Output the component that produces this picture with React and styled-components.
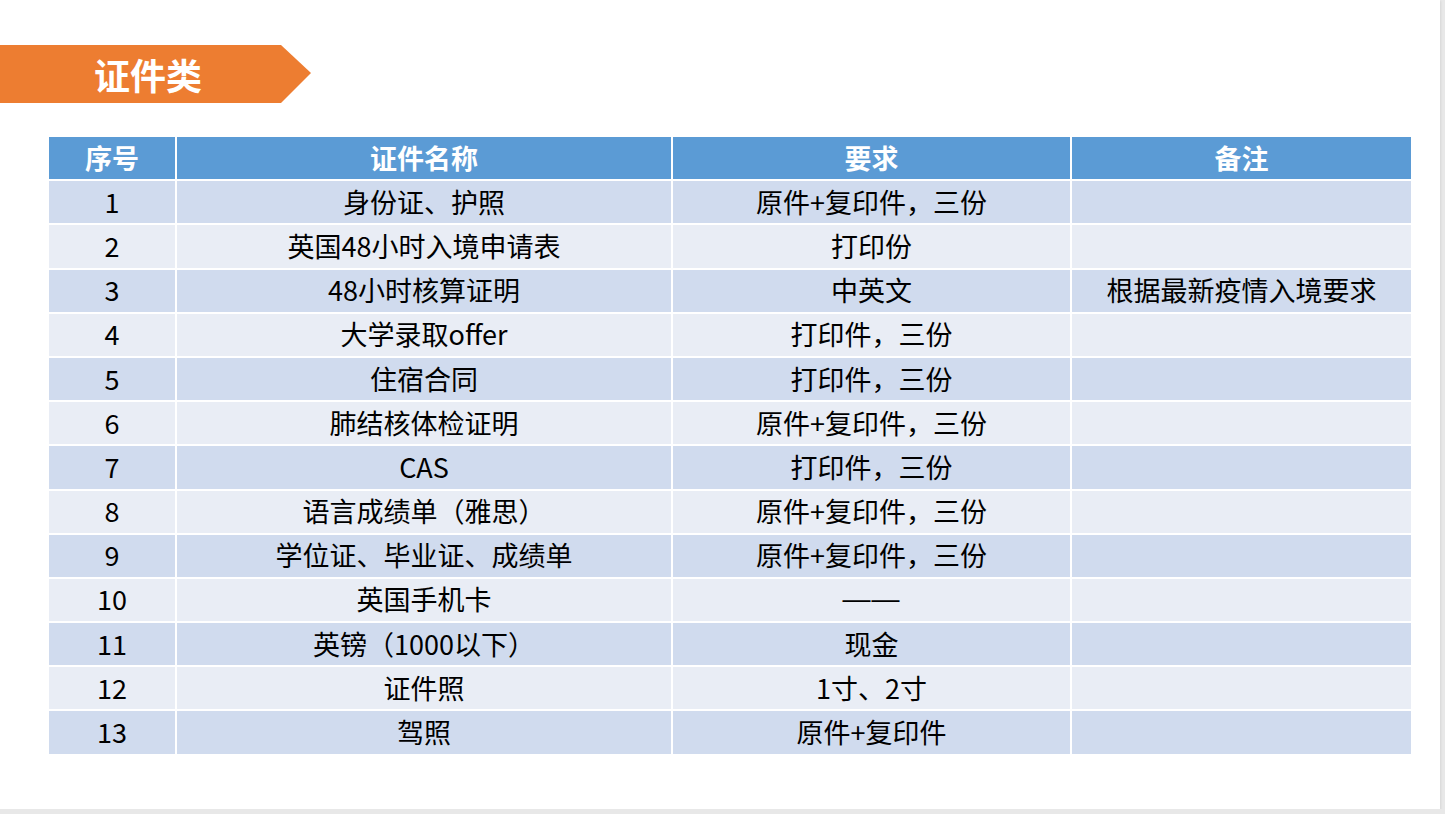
import React from "react";
import styled, { createGlobalStyle } from "styled-components";

const Global = createGlobalStyle`
  html, body { margin: 0; padding: 0; background: #e8e8e8; }
  body { font-family: "Microsoft YaHei", "Noto Sans CJK SC", "Noto Sans", sans-serif; }
`;

const Slide = styled.div`
  width: 1440px;
  height: 809px;
  background: #ffffff;
  box-shadow: 1px 1px 2px rgba(0,0,0,0.08);
  padding-top: 45px;
  box-sizing: border-box;
`;

const Banner = styled.div`
  width: 311px;
  height: 58px;
  background: #ed7d31;
  clip-path: polygon(0 0, 281px 0, 311px 28px, 281px 58px, 0 58px);
  display: flex;
  align-items: center;
  padding-left: 94px;
  box-sizing: border-box;
  color: #ffffff;
  font-weight: 700;
  font-size: 36px;
  line-height: 1;
`;

const Table = styled.div`
  margin: 34px 0 0 49px;
  width: 1362px;
  display: grid;
  grid-template-columns: 126px 494px 397px 339px;
  grid-auto-rows: 42.2px;
  gap: 2px;
  background: #ffffff;
`;

const Cell = styled.div`
  display: flex;
  align-items: center;
  justify-content: center;
  font-size: 27px;
  line-height: 1;
  white-space: nowrap;
  padding-bottom: 2px;
  box-sizing: border-box;
  color: ${(p) => (p.$head ? "#ffffff" : "#000000")};
  font-weight: ${(p) => (p.$head ? 700 : 400)};
  background: ${(p) => (p.$head ? "#5b9bd5" : p.$odd ? "#d0dbee" : "#e9edf5")};
`;

const Dash = styled.span`
  font-family: "Liberation Sans", sans-serif;
  letter-spacing: 1px;
  font-size: 28px;
`;

const rows = [
  ["1", "身份证、护照", "原件+复印件，三份", ""],
  ["2", "英国48小时入境申请表", "打印份", ""],
  ["3", "48小时核算证明", "中英文", "根据最新疫情入境要求"],
  ["4", "大学录取offer", "打印件，三份", ""],
  ["5", "住宿合同", "打印件，三份", ""],
  ["6", "肺结核体检证明", "原件+复印件，三份", ""],
  ["7", "CAS", "打印件，三份", ""],
  ["8", "语言成绩单（雅思）", "原件+复印件，三份", ""],
  ["9", "学位证、毕业证、成绩单", "原件+复印件，三份", ""],
  ["10", "英国手机卡", <Dash>——</Dash>, ""],
  ["11", "英镑（1000以下）", "现金", ""],
  ["12", "证件照", "1寸、2寸", ""],
  ["13", "驾照", "原件+复印件", ""],
];

const head = ["序号", "证件名称", "要求", "备注"];

export default function App() {
  return (
    <>
      <Global />
      <Slide>
        <Banner>证件类</Banner>
        <Table>
          {head.map((h) => (
            <Cell key={h} $head>{h}</Cell>
          ))}
          {rows.map((r, i) =>
            r.map((c, j) => (
              <Cell key={i + "-" + j} $odd={i % 2 === 0}>{c}</Cell>
            ))
          )}
        </Table>
      </Slide>
    </>
  );
}
